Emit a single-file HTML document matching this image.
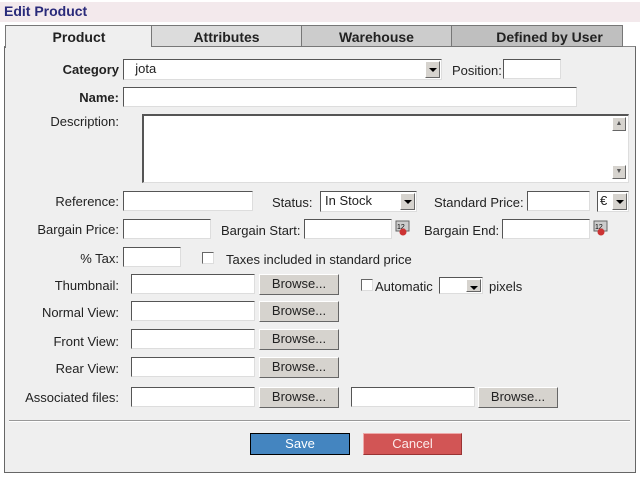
<!DOCTYPE html>
<html><head><meta charset="utf-8"><style>
body{margin:0;width:640px;height:480px;background:#fff;font-family:"Liberation Sans",sans-serif;font-size:13px;color:#222;position:relative;overflow:hidden}
div,span{position:absolute;box-sizing:border-box}
.l{text-align:right;white-space:nowrap;line-height:14px}
.in{background:#fff;border:1px solid;border-color:#555 #ddd #ddd #555}
.sel{background:#fff;border:1px solid;border-color:#555 #ddd #ddd #555;line-height:18px;padding-left:4px}
.arr{position:absolute;right:1px;top:1px;width:15px;bottom:1px;background:#d6d3ce;border:1px solid;border-color:#fff #666 #666 #fff}
.arr:after{content:"";position:absolute;left:3px;top:6px;border-left:4px solid transparent;border-right:4px solid transparent;border-top:4px solid #000}
.btn{background:#d6d3ce;border:1px solid;border-color:#fff #666 #666 #fff;text-align:center;line-height:18px;color:#222}
.cb{width:12px;height:12px;background:#fff;border:1px solid;border-color:#666 #ddd #ddd #666}
.tab{top:25px;height:22px;text-align:center;font-weight:bold;font-size:14px;line-height:22px;border:1px solid #777;border-bottom:none}
</style></head><body>
<div style="left:0;top:2px;width:640px;height:20px;background:#f3e9ec"></div>
<div style="left:4px;top:3px;font-weight:bold;font-size:14px;color:#2a2a7a">Edit Product</div>
<div style="left:4px;top:46px;width:632px;height:427px;background:#efefef;border:1px solid #666;border-top-color:#888"></div>
<div class="tab" style="left:5px;width:147px;background:#efefef;height:23px;border-right:none">Product</div>
<div class="tab" style="left:151px;width:151px;background:#dcdcdc;border-bottom:1px solid #777">Attributes</div>
<div class="tab" style="left:301px;width:151px;background:#cccccc;border-bottom:1px solid #777">Warehouse</div>
<div class="tab" style="left:451px;width:172px;background:#bfbfbf;border-bottom:1px solid #777;padding-left:25px">Defined by User</div>

<div class="l" style="right:521px;top:63px;font-weight:bold">Category</div>
<div class="sel" style="left:123px;top:59px;width:319px;height:21px">&nbsp;&nbsp;jota<span class="arr"></span></div>
<div class="l" style="left:452px;top:64px">Position:</div>
<div class="in" style="left:503px;top:59px;width:58px;height:20px"></div>

<div class="l" style="right:521px;top:91px;font-weight:bold">Name:</div>
<div class="in" style="left:123px;top:87px;width:454px;height:20px"></div>

<div class="l" style="right:521px;top:115px">Description:</div>
<div class="in" style="left:142px;top:114px;width:487px;height:69px;border-width:2px 1px 1px 2px"></div>
<div class="btn" style="left:612px;top:117px;width:14px;height:14px;line-height:12px;font-size:7px;color:#555">▲</div>
<div class="btn" style="left:612px;top:165px;width:14px;height:14px;line-height:12px;font-size:7px;color:#555">▼</div>

<div class="l" style="right:521px;top:195px">Reference:</div>
<div class="in" style="left:123px;top:191px;width:130px;height:20px"></div>
<div class="l" style="left:272px;top:196px">Status:</div>
<div class="sel" style="left:320px;top:191px;width:97px;height:21px">In Stock<span class="arr"></span></div>
<div class="l" style="left:434px;top:196px">Standard Price:</div>
<div class="in" style="left:527px;top:191px;width:63px;height:20px"></div>
<div class="sel" style="left:597px;top:191px;width:32px;height:21px;padding-left:2px">€<span class="arr"></span></div>

<div class="l" style="right:521px;top:223px">Bargain Price:</div>
<div class="in" style="left:123px;top:219px;width:88px;height:20px"></div>
<div class="l" style="left:221px;top:224px">Bargain Start:</div>
<div class="in" style="left:304px;top:219px;width:88px;height:20px"></div>
<svg style="position:absolute;left:395px;top:220px" width="15" height="16"><rect x="1" y="1" width="13" height="10" fill="#ccc" stroke="#666"/><text x="2" y="9" font-size="7" font-family="Liberation Sans">12</text><circle cx="8" cy="12" r="3.5" fill="#c33"/></svg>
<div class="l" style="left:424px;top:224px">Bargain End:</div>
<div class="in" style="left:502px;top:219px;width:88px;height:20px"></div>
<svg style="position:absolute;left:593px;top:220px" width="15" height="16"><rect x="1" y="1" width="13" height="10" fill="#ccc" stroke="#666"/><text x="2" y="9" font-size="7" font-family="Liberation Sans">12</text><circle cx="8" cy="12" r="3.5" fill="#c33"/></svg>

<div class="l" style="right:521px;top:252px">% Tax:</div>
<div class="in" style="left:123px;top:247px;width:58px;height:20px"></div>
<div class="cb" style="left:202px;top:252px"></div>
<div class="l" style="left:226px;top:253px">Taxes included in standard price</div>

<div class="l" style="right:521px;top:279px">Thumbnail:</div>
<div class="in" style="left:131px;top:274px;width:124px;height:20px"></div>
<div class="btn" style="left:259px;top:274px;width:80px;height:21px">Browse...</div>
<div class="cb" style="left:361px;top:279px"></div>
<div class="l" style="left:375px;top:280px">Automatic</div>
<div class="sel" style="left:439px;top:277px;width:44px;height:17px"><span class="arr"></span></div>
<div class="l" style="left:489px;top:280px">pixels</div>

<div class="l" style="right:521px;top:306px">Normal View:</div>
<div class="in" style="left:131px;top:301px;width:124px;height:20px"></div>
<div class="btn" style="left:259px;top:301px;width:80px;height:21px">Browse...</div>
<div class="l" style="right:521px;top:335px">Front View:</div>
<div class="in" style="left:131px;top:329px;width:124px;height:20px"></div>
<div class="btn" style="left:259px;top:329px;width:80px;height:21px">Browse...</div>
<div class="l" style="right:521px;top:362px">Rear View:</div>
<div class="in" style="left:131px;top:357px;width:124px;height:20px"></div>
<div class="btn" style="left:259px;top:357px;width:80px;height:21px">Browse...</div>
<div class="l" style="right:521px;top:391px">Associated files:</div>
<div class="in" style="left:131px;top:387px;width:124px;height:20px"></div>
<div class="btn" style="left:259px;top:387px;width:80px;height:21px">Browse...</div>
<div class="in" style="left:351px;top:387px;width:124px;height:20px"></div>
<div class="btn" style="left:478px;top:387px;width:80px;height:21px">Browse...</div>

<div style="left:9px;top:420px;width:621px;height:2px;border-top:1px solid #999;border-bottom:1px solid #fff"></div>
<div class="btn" style="left:250px;top:433px;width:100px;height:22px;background:#4485c0;color:#fff;border-color:#000 #000 #000 #000;line-height:20px">Save</div>
<div class="btn" style="left:363px;top:433px;width:99px;height:22px;background:#d25555;color:#fbeaea;border-color:#eaa #933 #933 #eaa;line-height:20px">Cancel</div>
</body></html>
